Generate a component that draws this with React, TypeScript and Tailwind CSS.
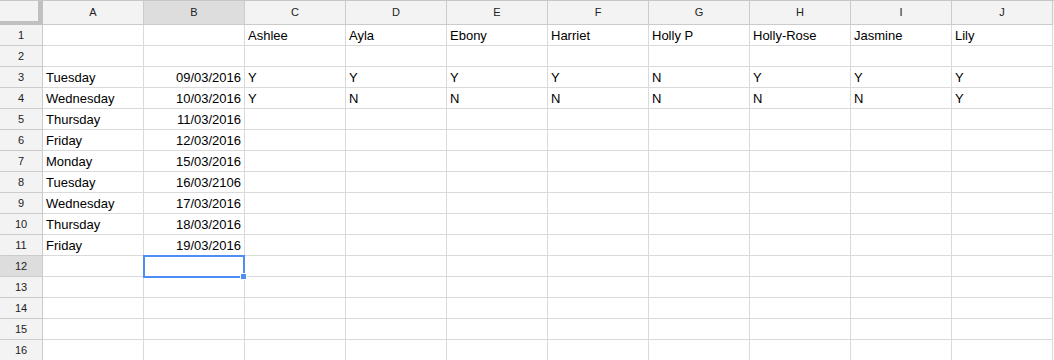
import React from 'react';

const cols = ['A', 'B', 'C', 'D', 'E', 'F', 'G', 'H', 'I', 'J'];

type Row = (string | null)[];

const names = ['Ashlee', 'Ayla', 'Ebony', 'Harriet', 'Holly P', 'Holly-Rose', 'Jasmine', 'Lily'];

const rows: Row[] = [
  [null, null, ...names],
  [],
  ['Tuesday', '09/03/2016', 'Y', 'Y', 'Y', 'Y', 'N', 'Y', 'Y', 'Y'],
  ['Wednesday', '10/03/2016', 'Y', 'N', 'N', 'N', 'N', 'N', 'N', 'Y'],
  ['Thursday', '11/03/2016'],
  ['Friday', '12/03/2016'],
  ['Monday', '15/03/2016'],
  ['Tuesday', '16/03/2106'],
  ['Wednesday', '17/03/2016'],
  ['Thursday', '18/03/2016'],
  ['Friday', '19/03/2016'],
  [],
  [],
  [],
  [],
  [],
];

const SEL_ROW = 12;
const SEL_COL = 1;

export default function App() {
  return (
    <div className="w-[1054px] h-[360px] overflow-hidden bg-white font-['Liberation_Sans',Arial,sans-serif] text-[13px] text-black">
      {/* column headers */}
      <div className="flex h-[25px] border-t border-[#c6c6c6] bg-[#f3f3f3]">
        <div className="w-[43px] shrink-0 border-r-[5px] border-b-[4px] border-[#c0c0c0] bg-[#f3f3f3]" />
        {cols.map((c, i) => (
          <div
            key={c}
            className={`w-[101px] shrink-0 border-r border-b border-[#cbcbcb] flex items-center justify-center text-[11px] text-[#222] ${
              i === SEL_COL ? 'bg-[#dddddd]' : 'bg-[#f3f3f3]'
            }`}
          >
            {c}
          </div>
        ))}
      </div>

      {rows.map((row, r) => {
        const n = r + 1;
        return (
          <div key={n} className="flex h-[21px]">
            <div
              className={`w-[43px] shrink-0 border-r border-b border-[#cbcbcb] flex items-center justify-center text-[11px] text-[#222] ${
                n === SEL_ROW ? 'bg-[#dddddd]' : 'bg-[#f3f3f3]'
              }`}
            >
              {n}
            </div>
            {cols.map((c, i) => {
              const v = row[i] ?? '';
              const isDate = i === 1;
              const selected = n === SEL_ROW && i === SEL_COL;
              return (
                <div
                  key={c}
                  className={`relative w-[101px] shrink-0 border-r border-b border-[#dadada] flex items-center whitespace-nowrap px-[3px] pt-[2px] ${
                    isDate ? 'justify-end' : 'justify-start'
                  }`}
                >
                  {v}
                  {selected && (
                    <div className="absolute -left-px -top-px w-[102px] h-[23px] border-2 border-[#4d8ef5] z-10">
                      <div className="absolute -right-[4px] -bottom-[4px] w-[7px] h-[7px] bg-[#4d8ef5] border border-white" />
                    </div>
                  )}
                </div>
              );
            })}
          </div>
        );
      })}
    </div>
  );
}
